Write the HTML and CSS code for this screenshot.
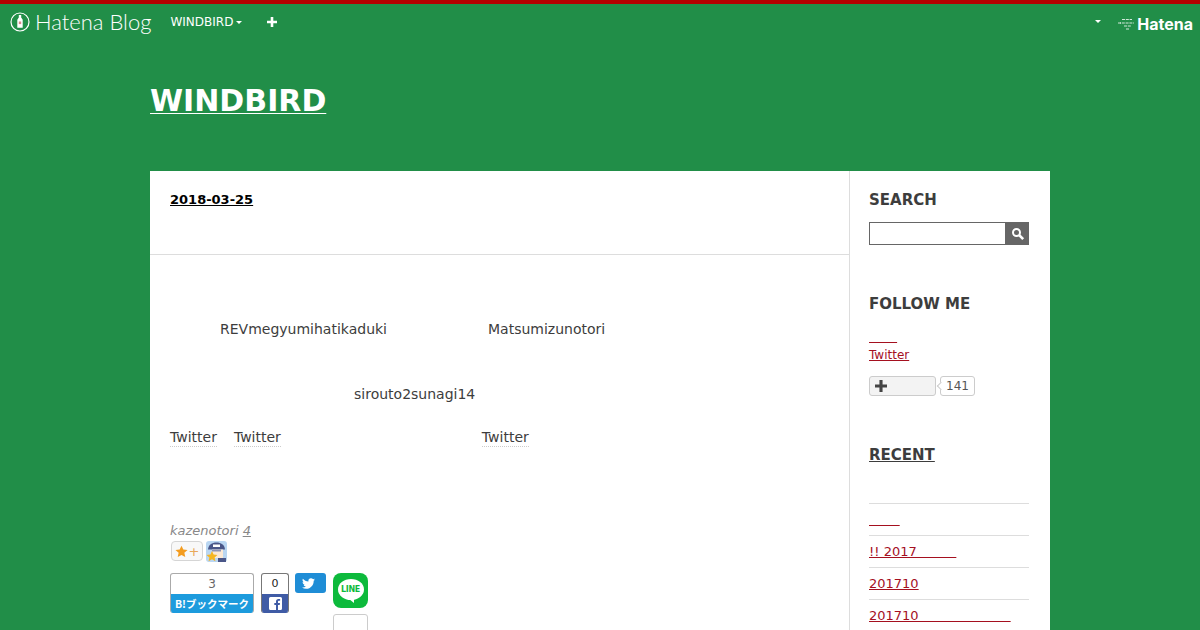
FILE: index.html
```html
<!DOCTYPE html>
<html lang="en">
<head>
  <meta charset="UTF-8" />
  <title>WINDBIRD</title>
  <link rel="stylesheet" href="styles.css">
</head>
<body>

  <div class="navbar">
    <a class="brand">
      <svg class="brand-icon" width="20" height="20" viewBox="0 0 20 20">
        <circle cx="10" cy="10" r="9" fill="none" stroke="#fff" stroke-width="1.200" />
        <path d="M8.800 3h2.400v2.600l1.500 2.200v8h-5.400v-8l1.500-2.200z" fill="#fff" />
        <rect x="8.800" y="9.500" width="2.400" height="2.600" fill="#d9888a" />
      </svg>
      <span class="brand-text">Hatena Blog</span>
    </a>
    <a class="nav-blog">WINDBIRD<span class="caret"></span></a>
    <svg class="nav-plus" width="10" height="10" viewBox="0 0 10 10"><path d="M3.700 0h2.600v3.700H10v2.600H6.300V10H3.700V6.300H0V3.700h3.700z" fill="#fff" /></svg>
    <span class="nav-right">
      <span class="caret"></span>
      <svg class="hatena-mark" width="16" height="12" viewBox="0 0 16 12">
        <path d="M4 1.500h10M0 5h16M2 5h1M6 8h7M8 11h3" stroke="#fff" stroke-width=".8" stroke-dasharray="3 .8" fill="none" />
      </svg>
      <span class="hatena-text">Hatena</span>
    </span>
  </div>

  <header class="blog-header">
    <h1 class="blog-title"><a>WINDBIRD</a></h1>
  </header>

  <div class="wrapper">
    <main class="entry">
      <div class="entry-head">
        <a class="entry-date">2018-03-25</a>
      </div>
      <div class="entry-body">
        <p class="line line-first"><span class="gap gap-50"></span>REVmegyumihatikaduki<span class="gap gap-101"></span>Matsumizunotori</p>
        <p class="line line-second"><span class="gap gap-184"></span>sirouto2sunagi14</p>
        <p class="line line-third"><a class="keyword">Twitter</a><span class="gap gap-17"></span><a class="keyword">Twitter</a><span class="gap gap-201"></span><a class="keyword">Twitter</a></p>
      </div>
      <div class="entry-foot">
        <p class="author">kazenotori <a>4</a></p>
        <div class="stars">
          <span class="star-add">
            <svg width="13" height="13" viewBox="0 0 20 20"><path d="M10 1l2.800 6 6.500.7-4.900 4.400 1.400 6.500L10 15.300l-5.800 3.300 1.400-6.500L.7 7.700 7.200 7z" fill="#f39c1f" /></svg>
            <span class="star-plus">+</span>
          </span>
          <span class="star-user">
            <svg width="21" height="21" viewBox="0 0 21 21">
              <rect width="21" height="21" rx="3" fill="#b9d6f2" />
              <path d="M2 8.500c.500-5 4-7 8.500-7S18.500 3.500 19 8.500z" fill="#4a5688" />
              <path d="M7 3.500h7v2.500H7z" fill="#fff" />
              <path d="M6 8.500h11v8.500H6z" fill="#fbe9d6" />
              <path d="M6 8.500h9v2H6z" fill="#8d93b5" />
              <path d="M12 17h8v4h-8z" fill="#4a5688" />
              <path d="M6 10l1.600 3.500 3.900.4-2.900 2.600.8 3.800-3.400-2-3.400 2 .8-3.800L.5 13.900l3.900-.4z" fill="#f5b622" />
            </svg>
          </span>
        </div>
        <div class="share">
          <div class="share-hatena">
            <span class="count">3</span>
            <span class="label">B!ブックマーク</span>
          </div>
          <div class="share-fb">
            <span class="count count-dark">0</span>
            <span class="label">
              <svg width="13" height="13" viewBox="0 0 13 13"><path d="M1.500 0h10A1.500 1.500 0 0 1 13 1.500v10a1.500 1.500 0 0 1-1.500 1.500H9V8h1.700l.3-2H9V4.800c0-.6.300-1 1-1h1.100V2H9.500C7.800 2 7 3 7 4.500V6H5.300v2H7v5H1.500A1.500 1.500 0 0 1 0 11.500v-10A1.500 1.500 0 0 1 1.500 0z" fill="#fff" /></svg>
            </span>
          </div>
          <div class="share-tw">
            <svg width="13" height="13" viewBox="0 0 24 24"><path d="M23.953 4.570a10 10 0 01-2.825.775 4.958 4.958 0 002.163-2.723c-.951.555-2.005.959-3.127 1.184a4.920 4.920 0 00-8.384 4.482C7.690 8.095 4.067 6.130 1.640 3.162a4.822 4.822 0 00-.666 2.475c0 1.710.870 3.213 2.188 4.096a4.904 4.904 0 01-2.228-.616v.060a4.923 4.923 0 003.946 4.827 4.996 4.996 0 01-2.212.085 4.936 4.936 0 004.604 3.417 9.867 9.867 0 01-6.102 2.105c-.390 0-.779-.023-1.170-.067a13.995 13.995 0 007.557 2.209c9.053 0 13.998-7.496 13.998-13.985 0-.210 0-.420-.015-.630A9.935 9.935 0 0024 4.590z" fill="#fff" /></svg>
          </div>
          <div class="share-line">
            <div class="line-icon">
              <span class="line-bubble">LINE</span>
            </div>
            <div class="line-count"></div>
          </div>
        </div>
      </div>
    </main>

    <aside class="sidebar">
      <section class="module module-search">
        <h3 class="module-title">SEARCH</h3>
        <div class="search-form">
          <input class="search-input" type="text" />
          <span class="search-btn">
            <svg width="14" height="14" viewBox="0 0 14 14">
              <circle cx="5.500" cy="5.500" r="3.500" fill="none" stroke="#fff" stroke-width="2" />
              <path d="M8.200 8.200l4 4" stroke="#fff" stroke-width="2.600" />
            </svg>
          </span>
        </div>
      </section>

      <section class="module module-follow">
        <h3 class="module-title">FOLLOW ME</h3>
        <p class="follow-blank"><a>&nbsp;&nbsp;&nbsp;&nbsp;&nbsp;&nbsp;&nbsp;</a></p>
        <p class="follow-link"><a>Twitter</a></p>
        <div class="subscribe">
          <span class="subscribe-btn">
            <svg width="12" height="12" viewBox="0 0 10 10"><path d="M3.700 0h2.600v3.700H10v2.600H6.300V10H3.700V6.300H0V3.700h3.700z" fill="#444" /></svg>
          </span>
          <span class="subscribe-count">141</span>
        </div>
      </section>

      <section class="module module-recent">
        <h3 class="module-title"><a>RECENT</a></h3>
        <ul class="recent-list">
          <li></li>
          <li><a>&nbsp;&nbsp;&nbsp;&nbsp;&nbsp;&nbsp;&nbsp;</a></li>
          <li><a>!! 2017&nbsp;&nbsp;&nbsp;&nbsp;&nbsp;&nbsp;&nbsp;&nbsp;&nbsp;</a></li>
          <li><a>201710</a></li>
          <li><a>201710&nbsp;&nbsp;&nbsp;&nbsp;&nbsp;&nbsp;&nbsp;&nbsp;&nbsp;&nbsp;&nbsp;&nbsp;&nbsp;&nbsp;&nbsp;&nbsp;&nbsp;&nbsp;&nbsp;&nbsp;&nbsp;</a></li>
        </ul>
      </section>
    </aside>
  </div>

</body>
</html>
```

FILE: styles.css
```css
* {
  box-sizing: border-box;
}

html, body {
  height: 630px;
  overflow: hidden;
}

body {
  margin: 0;
  background-color: #218e48;
  font-family: "DejaVu Sans", sans-serif;
  color: #3d3d3d;
}

p, h1, h3, ul {
  margin: 0;
  padding: 0;
}

/* navbar */
.navbar {
  display: flex;
  align-items: center;
  height: 39px;
  padding: 0 7px 0 10px;
  border-top: 4px solid #b40000;
  color: #fff;
}

.brand {
  display: flex;
  align-items: center;
  gap: 5px;
}

.brand-text {
  font-family: Lato, sans-serif;
  font-weight: 300;
  font-size: 22px;
  color: #fff;
}

.nav-blog {
  margin-left: 19px;
  font-size: 12px;
}

.caret {
  display: inline-block;
  margin-left: 3px;
  vertical-align: middle;
  border-top: 3px solid #fff;
  border-left: 3px solid transparent;
  border-right: 3px solid transparent;
}

.nav-plus {
  margin-left: 25px;
}

.nav-right {
  display: flex;
  align-items: center;
  margin-left: auto;
}

.hatena-mark {
  margin: 4px 0 0 17px;
}

.hatena-text {
  margin: 4px 0 0 3px;
  font-family: Inter, sans-serif;
  font-weight: 700;
  font-size: 16px;
}

/* header */
.blog-header {
  width: 900px;
  height: 132px;
  margin: 0 auto;
  padding-top: 44px;
}

.blog-title {
  font-size: 30px;
  line-height: 36px;
  color: #fff;
}

.blog-title a {
  text-decoration: underline;
  text-decoration-thickness: 1px;
  text-underline-offset: 2px;
}

/* main layout */
.wrapper {
  display: flex;
  width: 900px;
  margin: 0 auto;
  height: 500px;
  background: #fff;
}

.entry {
  width: 700px;
  border-right: 1px solid #ddd;
}

.entry-head {
  height: 84px;
  padding: 18px 20px 0;
  border-bottom: 1px solid #ddd;
}

.entry-date {
  font-size: 13px;
  font-weight: bold;
  color: #000;
  text-decoration: underline;
}

.entry-body {
  padding: 0 20px;
  font-size: 14px;
}

.line {
  line-height: 22px;
}

.line-first {
  padding-top: 63px;
}

.line-second {
  padding-top: 43px;
}

.line-third {
  padding-top: 21px;
}

.gap {
  display: inline-block;
}

.gap-17 { width: 17px; }
.gap-50 { width: 50px; }
.gap-101 { width: 101px; }
.gap-184 { width: 184px; }
.gap-201 { width: 201px; }

.keyword {
  padding-bottom: 1px;
  border-bottom: 1px dotted #ccc;
}

.entry-foot {
  padding: 0 20px;
}

.author {
  margin-top: 75px;
  font-size: 13px;
  line-height: 16px;
  font-style: italic;
  color: #888;
}

.author a {
  text-decoration: underline;
}

.stars {
  display: flex;
  align-items: center;
  gap: 3px;
  height: 22px;
  margin-top: 1px;
}

.star-add {
  display: flex;
  align-items: center;
  justify-content: center;
  gap: 1px;
  width: 32px;
  height: 20px;
  margin-left: 1px;
  border: 1px solid #d5d5d5;
  border-radius: 4px;
  background: #f8f8f8;
}

.star-plus {
  font-size: 13px;
  color: #e8a85a;
}

.star-user {
  display: flex;
}

.share {
  display: flex;
  align-items: flex-start;
  margin-top: 11px;
}

.share-hatena, .share-fb {
  display: flex;
  flex-direction: column;
  height: 40px;
  overflow: hidden;
  border-radius: 3px;
}

.share-hatena {
  width: 84px;
  border: 1px solid #aaa;
  border-bottom: none;
}

.share-fb {
  width: 28px;
  margin-left: 7px;
  border: 1px solid #777;
  border-bottom: none;
}

.count {
  flex: none;
  height: 20px;
  text-align: center;
  font-size: 12px;
  line-height: 20px;
  color: #666;
}

.count-dark {
  font-size: 11px;
  color: #222;
}

.label {
  display: flex;
  flex: 1;
  align-items: center;
  justify-content: center;
  color: #fff;
}

.share-hatena .label {
  margin: 0 -1px;
  background: #1d9bdd;
  font-family: "Noto Sans CJK JP", sans-serif;
  font-weight: 700;
  font-size: 10.500px;
}

.share-fb .label {
  margin: 0 -1px;
  background: #3f5ba5;
}

.share-tw {
  display: flex;
  align-items: center;
  justify-content: center;
  width: 31px;
  height: 20px;
  margin-left: 6px;
  padding-right: 4px;
  border-radius: 3px;
  background: #1f8dd6;
}

.share-line {
  margin-left: 7px;
}

.line-icon {
  display: flex;
  align-items: center;
  justify-content: center;
  width: 35px;
  height: 35px;
  padding-bottom: 3px;
  border-radius: 8px;
  background: #0dba3c;
}

.line-bubble {
  position: relative;
  width: 26px;
  height: 21px;
  border-radius: 50%;
  background: #fff;
  text-align: center;
  font-size: 8px;
  font-weight: bold;
  line-height: 21px;
  letter-spacing: -.3px;
  color: #0dba3c;
}

.line-bubble::after {
  content: "";
  position: absolute;
  left: 11px;
  bottom: -3px;
  border-top: 4px solid #fff;
  border-left: 5px solid transparent;
}

.line-count {
  width: 35px;
  height: 35px;
  margin-top: 6px;
  border: 1px solid #ccc;
  border-radius: 3px;
}

/* sidebar */
.sidebar {
  width: 200px;
  padding: 0 21px 0 19px;
}

.module-title {
  font-size: 15px;
  line-height: 20px;
  color: #3d3d3d;
}

.module-title a {
  text-decoration: underline;
}

.module-search {
  padding-top: 19px;
}

.search-form {
  display: flex;
  height: 23px;
  margin-top: 12px;
}

.search-input {
  flex: 1;
  min-width: 0;
  border: 1px solid #666;
  background: #fff;
}

.search-btn {
  display: flex;
  align-items: center;
  justify-content: center;
  width: 23px;
  background: #666;
}

.module-follow {
  padding-top: 49px;
}

.follow-blank, .follow-link {
  font-size: 12px;
  line-height: 15px;
}

.follow-blank {
  margin-top: 16px;
  word-spacing: .2px;
}

.follow-link {
  margin-top: 3px;
}

.follow-blank a, .follow-link a, .recent-list a {
  color: #a5101f;
  text-decoration: underline;
}

.subscribe {
  display: flex;
  gap: 4px;
  margin-top: 13px;
}

.subscribe-btn {
  display: flex;
  align-items: center;
  width: 67px;
  height: 20px;
  padding-left: 5px;
  border: 1px solid #ccc;
  border-radius: 3px;
  background: #f3f3f3;
}

.subscribe-count {
  position: relative;
  width: 35px;
  height: 20px;
  border: 1px solid #ccc;
  border-radius: 3px;
  background: #fff;
  text-align: center;
  font-size: 12px;
  line-height: 18px;
  color: #555;
}

.subscribe-count::before {
  content: "";
  position: absolute;
  left: -3px;
  top: 6px;
  width: 5px;
  height: 5px;
  border-left: 1px solid #ccc;
  border-bottom: 1px solid #ccc;
  background: #fff;
  transform: rotate(45deg);
}

.module-recent {
  padding-top: 49px;
}

.recent-list {
  margin-top: 28px;
  list-style: none;
  font-size: 13px;
  word-spacing: .25px;
}

.recent-list li {
  height: 32px;
  padding-top: 5px;
  border-top: 1px solid #ddd;
  line-height: 22px;
}

.recent-list li:first-child {
  height: 10px;
  padding: 0;
  border-top: none;
}
```
